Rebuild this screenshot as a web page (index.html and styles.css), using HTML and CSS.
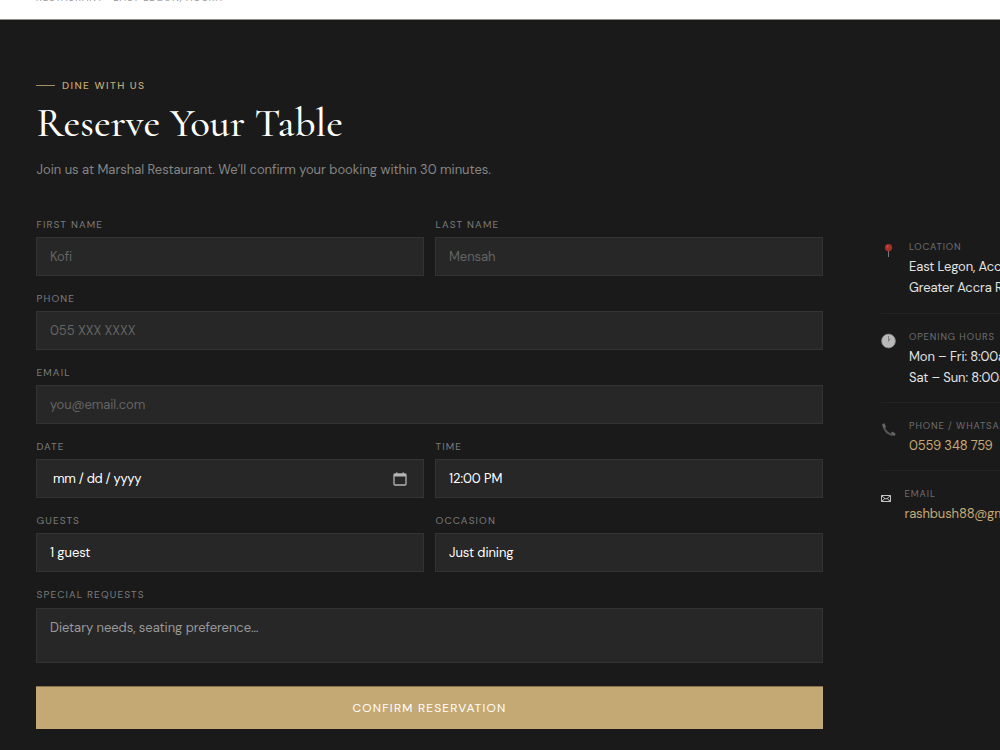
FILE: index.html
```
<!DOCTYPE html>
<html lang="en">
<head>
  <meta charset="UTF-8">
  <title>Marshal Restaurant</title>
  <link rel="stylesheet" href="styles.css">
</head>
<body>
  <header class="topbar"><p>RESTAURANT · EAST LEGON, ACCRA</p></header>

  <section class="reserve">
    <div class="reserve-main">
      <p class="eyebrow">DINE WITH US</p>
      <h2>Reserve Your Table</h2>
      <p class="intro">Join us at Marshal Restaurant. We’ll confirm your booking within 30 minutes.</p>

      <form class="form">
        <label class="field"><span>FIRST NAME</span><input type="text" placeholder="Kofi"></label>
        <label class="field"><span>LAST NAME</span><input type="text" placeholder="Mensah"></label>
        <label class="field wide"><span>PHONE</span><input type="text" placeholder="055 XXX XXXX"></label>
        <label class="field wide"><span>EMAIL</span><input type="text" placeholder="you@email.com"></label>
        <label class="field"><span>DATE</span>
          <div class="date">
            <b>mm / dd / yyyy</b>
            <svg width="14" height="14" viewBox="0 0 14 14"><path d="M2 2h10q1 0 1 1v9q0 1-1 1H2q-1 0-1-1V3q0-1 1-1z" fill="none" stroke="#b4b4b4" stroke-width="1.3"/><path d="M1 2h12v2.4H1zM3 .4h1.4V2H3zM9.6.4H11V2H9.6z" fill="#b4b4b4"/></svg>
          </div>
        </label>
        <label class="field"><span>TIME</span><select><option>12:00 PM</option></select></label>
        <label class="field"><span>GUESTS</span><select><option>1 guest</option></select></label>
        <label class="field"><span>OCCASION</span><select><option>Just dining</option></select></label>
        <label class="field wide notes"><span>SPECIAL REQUESTS</span><textarea placeholder="Dietary needs, seating preference…"></textarea></label>
        <button class="confirm" type="button">CONFIRM RESERVATION</button>
      </form>
    </div>

    <aside class="info">
      <div class="info-item">
        <svg class="icon" width="15" height="18" viewBox="0 0 15 18"><path d="M7.5 7v7" stroke="#777" stroke-width="1.1"/><circle cx="7.5" cy="4.6" r="3.6" fill="#a9302a"/><circle cx="6.6" cy="3.6" r="1" fill="#c9554d"/></svg>
        <div><h4>LOCATION</h4><p>East Legon, Accra<br>Greater Accra Region</p></div>
      </div>
      <div class="info-item">
        <svg class="icon" width="15" height="18" viewBox="0 0 15 18"><circle cx="7.5" cy="8" r="6.9" fill="#b9b9b9" stroke="#888" stroke-width=".8"/><path d="M7.5 8.3V3M7.5 8.3l1.8-3" stroke="#777" stroke-width=".9" fill="none"/></svg>
        <div><h4>OPENING HOURS</h4><p>Mon – Fri: 8:00am – 10:00pm<br>Sat – Sun: 8:00am – 11:00pm</p></div>
      </div>
      <div class="info-item">
        <svg class="icon" width="15" height="18" viewBox="0 0 15 18"><path d="M2.6 3.4C3.4 8.4 7 12.2 12 13" fill="none" stroke="#555" stroke-width="2"/><path d="M1 2.6 3.4 1.2 5 4.9 2.5 6.2zM10 11.1l1.3-1.6 3.4 2.3-1.4 2.4z" fill="#666"/></svg>
        <div><h4>PHONE / WHATSAPP</h4><p class="gold">0559 348 759</p></div>
      </div>
      <div class="info-item">
        <svg class="icon" width="10.5" height="18" viewBox="0 0 10.5 18"><path d="M.5 5.5h9v6h-9zM.5 5.5 4 8.7h2l3.5-3.2M.5 11.5 3.8 8.6M9.5 11.5 6.2 8.6" fill="none" stroke="#c4c4c4"/></svg>
        <div><h4>EMAIL</h4><p class="gold">rashbush88@gmail.com</p></div>
      </div>
    </aside>
  </section>
</body>
</html>
```

FILE: styles.css
```
* {
  box-sizing: border-box;
  margin: 0;
  padding: 0;
}
body {
  height: 750px;
  overflow: hidden;
  background: #1a1a1a;
  font-family: 'DM Sans', Inter, 'Open Sans', sans-serif;
  font-size: 13px;
}
.topbar {
  height: 20px;
  padding-left: 36px;
  background: #fff;
  border-bottom: 1px solid #8d8f89;
  overflow: hidden;
}
.topbar p {
  margin-top: -8px;
  font-size: 9.6px;
  line-height: 12px;
  letter-spacing: 0.97px;
  color: #999;
}
.reserve {
  display: grid;
  grid-template-columns: 787px 360px;
  column-gap: 58px;
  width: 100%;
  padding: 58px 0 0 36px;
  overflow: hidden;
}
.eyebrow {
  display: flex;
  align-items: center;
  gap: 7px;
  height: 15px;
  font-size: 10.3px;
  font-weight: 500;
  letter-spacing: 1.4px;
  color: #c4a975;
}
.eyebrow::before {
  content: "";
  width: 19px;
  height: 1px;
  background: #a58e62;
}
h2 {
  margin-top: 7px;
  padding-left: 0.5px;
  font-family: 'Cormorant Garamond', 'Liberation Serif', serif;
  font-size: 40.7px;
  font-weight: 500;
  line-height: 46px;
  color: #fff;
  white-space: nowrap;
}
.intro {
  margin-top: 13px;
  padding-left: 0.5px;
  line-height: 21px;
  color: #858585;
  letter-spacing: -0.02px;
}
.form {
  display: grid;
  grid-template-columns: 1fr 1fr;
  column-gap: 11px;
  row-gap: 15px;
  margin-top: 37px;
}
.field {
  display: block;
  height: 59.08px;
}
.field > span {
  display: block;
  height: 20px;
  padding-left: 0.5px;
  font-size: 10px;
  line-height: 15px;
  letter-spacing: 1.15px;
  color: #7c7c7c;
}
.wide,
.confirm {
  grid-column: 1 / -1;
}
input,
select,
textarea,
.date {
  display: block;
  width: 100%;
  height: 39px;
  padding: 0 13px;
  border: 1px solid #333;
  border-radius: 0;
  outline: none;
  background: #272727;
  color: #fff;
  font-family: inherit;
  font-size: 13px;
  letter-spacing: -0.08px;
  appearance: none;
}
input::placeholder {
  color: #646464;
}
.date {
  display: flex;
  align-items: center;
  justify-content: space-between;
  padding: 0 16px;
  letter-spacing: -0.3px;
}
.date b {
  font-weight: 400;
}
textarea {
  height: 55px;
  padding: 10px 13px;
  line-height: 17px;
  letter-spacing: -0.05px;
  resize: none;
}
textarea::placeholder {
  color: #999;
}
.notes {
  height: 76px;
}
.notes > span {
  height: 20.6px;
}
.confirm {
  height: 43px;
  margin-top: 8px;
  border: none;
  border-top: 1px solid #85734f;
  background: #c4a975;
  color: #fff;
  font-family: inherit;
  font-size: 12px;
  font-weight: 400;
  letter-spacing: 1.2px;
}
.info {
  padding-top: 146.8px;
}
.info-item {
  display: flex;
  gap: 13px;
  padding: 15.6px 0 14.6px;
  border-bottom: 1px solid #232323;
}
.info-item:last-child {
  border: none;
}
.icon {
  flex: none;
  margin-top: 3px;
}
h4 {
  height: 16px;
  font-size: 9.5px;
  font-weight: 400;
  line-height: 14px;
  letter-spacing: 0.88px;
  color: #6f6f6f;
  white-space: nowrap;
}
.info p {
  line-height: 21px;
  letter-spacing: -0.13px;
  color: #e2e2e2;
  white-space: nowrap;
}
.info .gold {
  color: #c4a975;
}
```
